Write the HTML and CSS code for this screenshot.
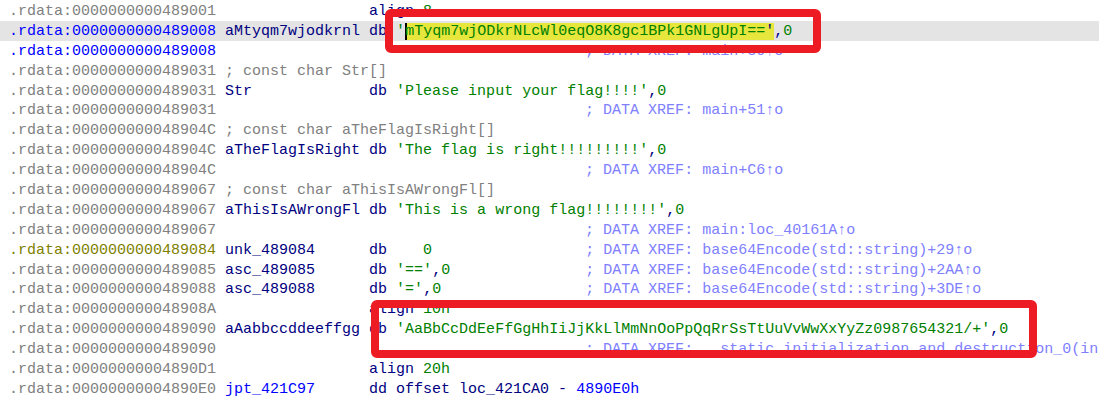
FILE: index.html
```html
<!DOCTYPE html>
<html lang="en">
<head>
	<meta charset="UTF-8">
	<title>IDA View - .rdata</title>
	<link rel="stylesheet" href="styles.css">
</head>
<body>
	<div class="listing">
		<div class="ln"><span class="addr">.rdata:0000000000489001</span>                 <span class="kw">align</span> <span class="num">8</span></div>
		<div class="ln cur"><span class="addr-sel">.rdata:0000000000489008</span> <span class="kw">aMtyqm7wjodkrnl db</span> <span class="str">'</span><span class="hl">mTyqm7wjODkrNLcWl0eqO8K8gc1BPk1GNLgUpI==<span class="kw">'</span></span><span class="kw">,</span><span class="str">0</span></div>
		<div class="ln"><span class="addr-sel">.rdata:0000000000489008</span>                                         <span class="xref">; DATA XREF: main+30↑o</span></div>
		<div class="ln"><span class="addr">.rdata:0000000000489031</span> <span class="cmt">; const char Str[]</span></div>
		<div class="ln"><span class="addr">.rdata:0000000000489031</span> <span class="kw">Str             db</span> <span class="str">'Please input your flag!!!!'</span><span class="kw">,</span><span class="str">0</span></div>
		<div class="ln"><span class="addr">.rdata:0000000000489031</span>                                         <span class="xref">; DATA XREF: main+51↑o</span></div>
		<div class="ln"><span class="addr">.rdata:000000000048904C</span> <span class="cmt">; const char aTheFlagIsRight[]</span></div>
		<div class="ln"><span class="addr">.rdata:000000000048904C</span> <span class="kw">aTheFlagIsRight db</span> <span class="str">'The flag is right!!!!!!!!!'</span><span class="kw">,</span><span class="str">0</span></div>
		<div class="ln"><span class="addr">.rdata:000000000048904C</span>                                         <span class="xref">; DATA XREF: main+C6↑o</span></div>
		<div class="ln"><span class="addr">.rdata:0000000000489067</span> <span class="cmt">; const char aThisIsAWrongFl[]</span></div>
		<div class="ln"><span class="addr">.rdata:0000000000489067</span> <span class="kw">aThisIsAWrongFl db</span> <span class="str">'This is a wrong flag!!!!!!!!'</span><span class="kw">,</span><span class="str">0</span></div>
		<div class="ln"><span class="addr">.rdata:0000000000489067</span>                                         <span class="xref">; DATA XREF: main:loc_40161A↑o</span></div>
		<div class="ln"><span class="addr-unk">.rdata:0000000000489084</span> <span class="kw">unk_489084      db</span>    <span class="str">0</span>                 <span class="xref">; DATA XREF: base64Encode(std::string)+29↑o</span></div>
		<div class="ln"><span class="addr">.rdata:0000000000489085</span> <span class="kw">asc_489085      db</span> <span class="str">'=='</span><span class="kw">,</span><span class="str">0</span>               <span class="xref">; DATA XREF: base64Encode(std::string)+2AA↑o</span></div>
		<div class="ln"><span class="addr">.rdata:0000000000489088</span> <span class="kw">asc_489088      db</span> <span class="str">'='</span><span class="kw">,</span><span class="str">0</span>                <span class="xref">; DATA XREF: base64Encode(std::string)+3DE↑o</span></div>
		<div class="ln"><span class="addr">.rdata:000000000048908A</span>                 <span class="kw">align</span> <span class="num">10h</span></div>
		<div class="ln"><span class="addr">.rdata:0000000000489090</span> <span class="kw">aAabbccddeeffgg db</span> <span class="str">'AaBbCcDdEeFfGgHhIiJjKkLlMmNnOoPpQqRrSsTtUuVvWwXxYyZz0987654321/+'</span><span class="kw">,</span><span class="str">0</span></div>
		<div class="ln"><span class="addr">.rdata:0000000000489090</span>                                         <span class="xref">; DATA XREF: __static_initialization_and_destruction_0(in</span></div>
		<div class="ln"><span class="addr">.rdata:00000000004890D1</span>                 <span class="kw">align</span> <span class="num">20h</span></div>
		<div class="ln"><span class="addr">.rdata:00000000004890E0</span> <span class="lbl">jpt_421C97</span>      <span class="kw">dd offset loc_421CA0 -</span> <span class="imm">4890E0h</span></div>
	</div>

	<!-- annotation boxes drawn over the listing -->
	<div class="mark mark-key"></div>
	<div class="mark mark-table"></div>
</body>
</html>
```

FILE: styles.css
```css
html, body {
	margin: 0;
	padding: 0;
	background: #ffffff;
	overflow: hidden;
}

body {
	position: relative;
	width: 1099px;
	height: 400px;
	font-family: "Liberation Mono", "DejaVu Sans Mono", monospace;
	font-size: 15px;
}

.listing {
	padding-top: 1px;
}

/* row pitch is 19.9px, the taller line-height just pushes the baseline down a bit */
.ln {
	height: 19.9px;
	line-height: 22px;
	padding-left: 9px;
	white-space: pre;
	color: #000080;
}

.ln.cur {
	background-color: #e4e4e4;
}

.addr { color: #808080; }
.addr-sel { color: #0000ff; }
.addr-unk { color: #808000; }
.kw { color: #000080; }
.lbl { color: #0000ff; }
.imm { color: #0000ff; }
.num { color: #008000; }
.str { color: #008000; }
.cmt { color: #808080; }
.xref { color: #8080ff; }

.hl {
	color: #008000;
	background-color: #e6e63c;
	box-shadow: inset 2px 0 0 #000000;
}

.mark {
	position: absolute;
	box-sizing: border-box;
	border: 8px solid #ed1c24;
	border-radius: 6px;
}

.mark-key {
	left: 385px;
	top: 9px;
	width: 436px;
	height: 44px;
}

.mark-table {
	left: 371px;
	top: 300px;
	width: 666px;
	height: 58px;
}
```
